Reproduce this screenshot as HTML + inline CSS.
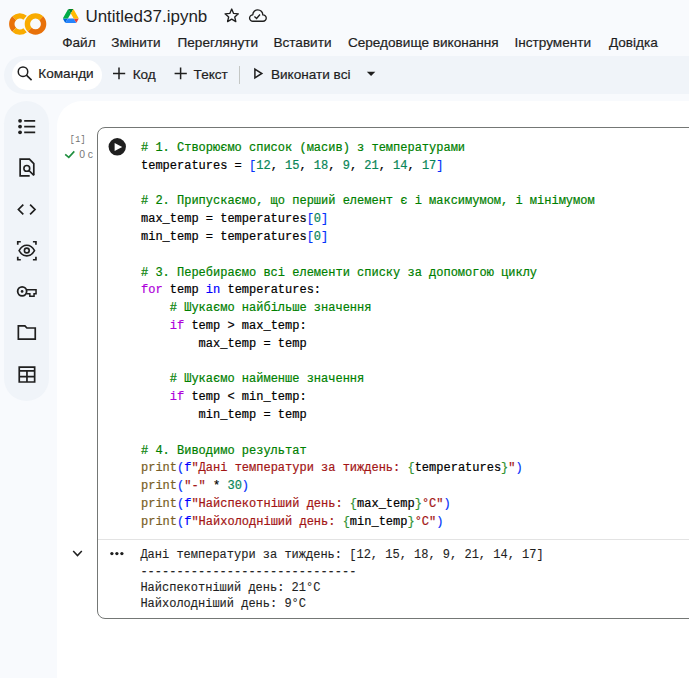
<!DOCTYPE html>
<html><head><meta charset="utf-8">
<style>
*{margin:0;padding:0;box-sizing:border-box}
html,body{width:689px;height:678px;overflow:hidden;background:#f8fafd;font-family:"Liberation Sans",sans-serif;color:#1f1f1f}
.a{position:absolute;white-space:pre}
.menu{font-size:13.6px;line-height:13.6px;top:36.2px;color:#1f1f1f;-webkit-text-stroke:0.2px currentColor}
.tb{font-size:13.6px;line-height:13.6px;color:#1f1f1f;-webkit-text-stroke:0.2px currentColor}
#bar{position:absolute;left:4px;top:56px;width:720px;height:37.5px;background:#f0f4f9;border-radius:19px}
#pill{position:absolute;left:12px;top:60px;width:90px;height:30px;background:#fff;border-radius:15px}
#side{position:absolute;left:4px;top:100.5px;width:45px;height:300px;background:#f0f4f9;border-radius:22.5px}
#panel{position:absolute;left:57px;top:101px;width:700px;height:640px;background:#fff;border-radius:25px 0 0 0}
#cell{position:absolute;left:97px;top:127px;width:650px;height:492px;border:1px solid #747775;border-radius:8px}
#div{position:absolute;left:98px;top:539px;width:650px;height:1px;background:#e3e3e3}
.code{position:absolute;left:141px;top:140.1px;font-family:"Liberation Mono",monospace;font-size:12px;line-height:17.8px;white-space:pre;color:#000;-webkit-text-stroke:0.2px currentColor}
.out{position:absolute;left:140.4px;top:547.2px;font-family:"Liberation Mono",monospace;font-size:12px;line-height:16.4px;white-space:pre;color:#1f1f1f;-webkit-text-stroke:0.12px currentColor}
.c{color:#008000}.k{color:#af00db}.b{color:#0000ff}.f{color:#795e26}.s{color:#a31515}.n{color:#098658}.p1{color:#0431fa}.p2{color:#319331}
svg{position:absolute;overflow:visible}
</style></head><body>
<!-- header -->


<!-- colab logo -->
<svg style="left:0;top:0" width="60" height="50" viewBox="0 0 60 50">
  <g fill="none" stroke-width="5.4">
    <path d="M25.11 17.8 A8.1 8.1 0 0 0 14.17 18.27" stroke="#f9ab00"/>
    <path d="M14.17 18.27 A8.1 8.1 0 0 0 14.17 29.73" stroke="#e8710a"/>
    <path d="M14.17 29.73 A8.1 8.1 0 0 0 25.11 30.2" stroke="#f9ab00"/>
  </g>
  <circle cx="35.5" cy="23.95" r="11.6" fill="#f8fafd"/>
  <g fill="none" stroke-width="5.4">
    <path d="M29.77 29.68 A8.1 8.1 0 0 1 41.23 18.22" stroke="#f9ab00"/>
    <path d="M41.23 18.22 A8.1 8.1 0 0 1 29.77 29.68" stroke="#e8710a"/>
  </g>
</svg>
<!-- drive -->
<svg style="left:62.6px;top:8.8px" width="15.6" height="14.07" viewBox="0 0 87.3 78">
<path d="m6.6 66.85 3.85 6.65c.8 1.4 1.95 2.5 3.3 3.3l13.75-23.8h-27.5c0 1.55.4 3.1 1.2 4.5z" fill="#0066da"/>
<path d="m43.65 25-13.75-23.8c-1.35.8-2.5 1.9-3.3 3.3l-25.4 44a9.06 9.06 0 0 0 -1.2 4.5h27.5z" fill="#00ac47"/>
<path d="m73.55 76.8c1.35-.8 2.5-1.9 3.3-3.3l1.6-2.75 7.65-13.25c.8-1.4 1.2-2.95 1.2-4.5h-27.502l5.852 11.5z" fill="#ea4335"/>
<path d="m43.65 25 13.75-23.8c-1.35-.8-2.9-1.2-4.5-1.2h-18.5c-1.6 0-3.150.45-4.5 1.2z" fill="#00832d"/>
<path d="m59.8 53h-32.3l-13.75 23.8c1.35.8 2.9 1.2 4.5 1.2h50.8c1.6 0 3.15-.45 4.5-1.2z" fill="#2684fc"/>
<path d="m73.4 26.5-12.7-22c-.8-1.4-1.95-2.5-3.3-3.3l-13.75 23.8 16.15 28h27.45c0-1.55-.4-3.1-1.2-4.5z" fill="#ffba00"/>
</svg>
<!-- star & cloud -->
<svg style="left:0;top:0" width="280" height="30" viewBox="0 0 280 30" fill="none" stroke="#1f1f1f" stroke-width="1.35" stroke-linejoin="round">
<path d="M231.70 9.00 L229.82 13.41 L225.04 13.84 L228.66 16.99 L227.59 21.66 L231.70 19.20 L235.81 21.66 L234.74 16.99 L238.36 13.84 L233.58 13.41 Z"/>
<path d="M253.15 21.25 H263.05 A3.2 3.2 0 1 0 262.8 14.86 A5 5 0 1 0 252.8 14.87 A3.2 3.2 0 1 0 253.15 21.25 Z"/>
<path d="M254.4 16.4 L256.6 18.5 L260 14.5" stroke-linejoin="miter"/>
</svg>
<div class="a" style="left:85.4px;top:7.5px;font-size:17px;line-height:17px">Untitled37.ipynb</div>
<div class="a menu" style="left:62.2px">Файл</div>
<div class="a menu" style="left:111.2px">Змінити</div>
<div class="a menu" style="left:177.5px">Переглянути</div>
<div class="a menu" style="left:273.4px">Вставити</div>
<div class="a menu" style="left:347.9px">Середовище виконання</div>
<div class="a menu" style="left:514.5px">Інструменти</div>
<div class="a menu" style="left:608.9px">Довідка</div>
<!-- toolbar -->
<div id="bar"></div>
<div id="pill"></div>
<div class="a tb" style="left:38.3px;top:67.4px">Команди</div>
<div class="a tb" style="left:132.7px;top:68px">Код</div>
<div class="a tb" style="left:193.6px;top:68px">Текст</div>
<div style="position:absolute;left:239px;top:65.5px;width:1px;height:18px;background:#c4c7c5"></div>
<div class="a tb" style="left:270.9px;top:68px">Виконати всі</div>

<svg style="left:0;top:0" width="400" height="100" viewBox="0 0 400 100" fill="none" stroke="#1f1f1f">
  <circle cx="23" cy="71.65" r="4.75" stroke-width="1.5"/>
  <path d="M26.4 75.1 L31.6 80.1" stroke-width="1.6"/>
  <path d="M113 73.5 H125.2 M119 67.6 V79.3" stroke-width="1.5"/>
  <path d="M174.6 73.5 H186.8 M180.6 67.6 V79.3" stroke-width="1.5"/>
  <path d="M254.9 69.2 L261.8 73.5 L254.9 77.9 Z" stroke-width="1.5" stroke-linejoin="miter"/>
  <path d="M366.8 71.8 H375.3 L371.05 76.1 Z" fill="#1f1f1f" stroke="none"/>
</svg>
<!-- sidebar & panel -->
<div id="side"></div>
<div id="panel"></div>
<div id="cell"></div>
<div id="div"></div>

<svg style="left:0;top:100px" width="60" height="300" viewBox="0 100 60 300" fill="none" stroke="#1f1f1f" stroke-width="1.7">
  <g fill="#1f1f1f" stroke="none"><circle cx="20.05" cy="120.8" r="1.9"/><circle cx="20.05" cy="126.6" r="1.9"/><circle cx="20.05" cy="132.3" r="1.9"/></g>
  <path d="M24.2 120.8 H35.2 M24.2 126.6 H35.2 M24.2 132.3 H35.2"/>
  <path d="M29.7 175.8 H20.15 V159.05 H29.4 L33.8 163.6 V175.3"/>
  <circle cx="26.8" cy="168.4" r="2.9" stroke-width="1.6"/>
  <path d="M28.9 170.5 L33.9 175.4"/>
  <path d="M23.3 204.6 L18.4 209.5 L23.3 214.4 M30.1 204.6 L35 209.5 L30.1 214.4"/>
  <path d="M17.75 244.8 V241.75 H20.8 M32.9 241.75 H35.95 V244.8 M17.75 256.8 V259.75 H20.8 M32.9 259.75 H35.95 V256.8"/>
  <path d="M19.1 250.6 C21.3 246.5 23.9 245.3 26.8 245.3 C29.7 245.3 32.3 246.5 34.5 250.6 C32.3 254.7 29.7 255.9 26.8 255.9 C23.9 255.9 21.3 254.7 19.1 250.6 Z" stroke-width="1.6"/>
  <circle cx="26.8" cy="250.5" r="2.4" stroke-width="1.6"/>
  <path d="M18.35 325.9 H24.9 L26.9 328.0 H35.25 V339.05 H18.35 Z"/>
  <path d="M19.25 367.05 H34.65 V382 H19.25 Z M19.25 370.9 H34.65 M19.25 376.6 H34.65 M26.95 370.9 V382"/>
</svg>
<svg style="left:0;top:270px" width="50" height="40" viewBox="0 270 50 40" fill="none" stroke="#1f1f1f" stroke-width="1.6">
<circle cx="22.15" cy="291.35" r="4.5" stroke-width="1.8"/>
<circle cx="22.1" cy="291.45" r="1.35" fill="#1f1f1f" stroke="none"/>
<path d="M26.3 289.75 H36.05 V293.75 H34.05 V296.15 H29.85 V293.75 H26.3" stroke-width="1.5"/>
</svg>

<div class="a" style="left:69.8px;top:134.8px;font-family:'Liberation Mono',monospace;font-size:8.4px;line-height:10px;color:#6f6f6f;letter-spacing:0.35px">[1]</div>
<svg style="left:0;top:0" width="140" height="620" viewBox="0 0 140 620">
  <path d="M65.2 154.3 L68.8 157.4 L74.3 151.4" fill="none" stroke="#1e8e3e" stroke-width="1.6"/>
  <circle cx="117.25" cy="146.8" r="8.7" fill="#1f1f1f"/>
  <path d="M114.6 142.9 V150.9 L122.2 146.9 Z" fill="#fff"/>
  <path d="M73.2 551 L77.5 555.6 L81.8 551" fill="none" stroke="#1f1f1f" stroke-width="1.5"/>
  <g fill="#1f1f1f"><circle cx="111.9" cy="553.6" r="1.65"/><circle cx="116.9" cy="553.6" r="1.65"/><circle cx="121.9" cy="553.6" r="1.65"/></g>
</svg>
<div class="a" style="left:79.2px;top:148.6px;font-size:10.4px;line-height:10px;color:#777;letter-spacing:0px;top:149.8px">0 с</div>
<div class="code"><span class="c"># 1. Створюємо список (масив) з температурами</span>
temperatures = <span class="p1">[</span><span class="n">12</span>, <span class="n">15</span>, <span class="n">18</span>, <span class="n">9</span>, <span class="n">21</span>, <span class="n">14</span>, <span class="n">17</span><span class="p1">]</span>

<span class="c"># 2. Припускаємо, що перший елемент є і максимумом, і мінімумом</span>
max_temp = temperatures<span class="p1">[</span><span class="n">0</span><span class="p1">]</span>
min_temp = temperatures<span class="p1">[</span><span class="n">0</span><span class="p1">]</span>

<span class="c"># 3. Перебираємо всі елементи списку за допомогою циклу</span>
<span class="k">for</span> temp <span class="b">in</span> temperatures:
    <span class="c"># Шукаємо найбільше значення</span>
    <span class="k">if</span> temp &gt; max_temp:
        max_temp = temp

    <span class="c"># Шукаємо найменше значення</span>
    <span class="k">if</span> temp &lt; min_temp:
        min_temp = temp

<span class="c"># 4. Виводимо результат</span>
<span class="f">print</span><span class="p1">(</span><span class="b">f</span><span class="s">"Дані температури за тиждень: </span><span class="p2">{</span>temperatures<span class="p2">}</span><span class="s">"</span><span class="p1">)</span>
<span class="f">print</span><span class="p1">(</span><span class="s">"-"</span> * <span class="n">30</span><span class="p1">)</span>
<span class="f">print</span><span class="p1">(</span><span class="b">f</span><span class="s">"Найспекотніший день: </span><span class="p2">{</span>max_temp<span class="p2">}</span><span class="s">°C"</span><span class="p1">)</span>
<span class="f">print</span><span class="p1">(</span><span class="b">f</span><span class="s">"Найхолодніший день: </span><span class="p2">{</span>min_temp<span class="p2">}</span><span class="s">°C"</span><span class="p1">)</span></div>
<div class="out">Дані температури за тиждень: [12, 15, 18, 9, 21, 14, 17]
------------------------------
Найспекотніший день: 21°C
Найхолодніший день: 9°C</div>
</body></html>
